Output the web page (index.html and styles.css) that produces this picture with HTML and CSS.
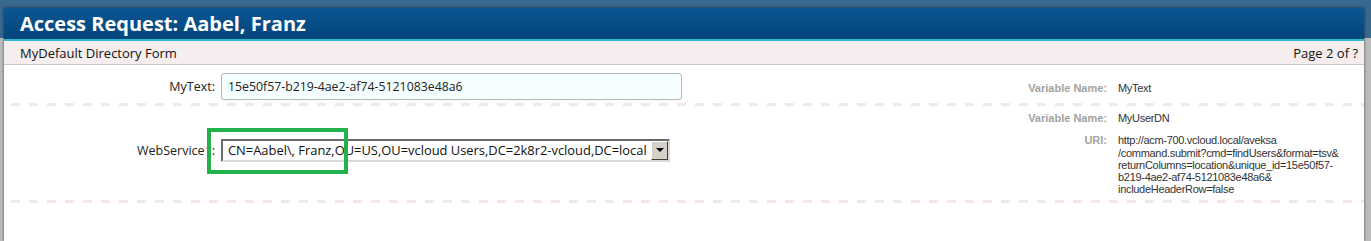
FILE: index.html
```
<!DOCTYPE html>
<html lang="en">
<head>
  <meta charset="UTF-8">
  <meta name="viewport" content="width=device-width, initial-scale=1.0">
  <title>Access Request: Aabel, Franz</title>
  <link rel="stylesheet" href="styles.css">
</head>
<body>
  <div class="window">
    <div class="titlebar">
      <h1>Access Request: Aabel, Franz</h1>
    </div>
    <div class="formbar">
      <span>MyDefault Directory Form</span>
      <span>Page 2 of ?</span>
    </div>

    <div class="field field-text">
      <label class="field-label" for="myText">MyText:</label>
      <div class="field-control">
        <input type="text" id="myText" class="textbox" value="15e50f57-b219-4ae2-af74-5121083e48a6">
      </div>
      <dl class="field-info">
        <dt>Variable Name:</dt>
        <dd>MyText</dd>
      </dl>
    </div>
    <div class="divider"></div>

    <div class="field field-ws">
      <label class="field-label" for="myUserDN">WebService<span class="req">*</span>:</label>
      <div class="field-control">
        <div class="dropdown">
          <select id="myUserDN">
            <option>CN=Aabel\, Franz,OU=US,OU=vcloud Users,DC=2k8r2-vcloud,DC=local</option>
          </select>
          <span class="dropdown-btn"><span class="arrow"></span></span>
        </div>
      </div>
      <dl class="field-info">
        <dt>Variable Name:</dt>
        <dd>MyUserDN</dd>
        <dt>URI:</dt>
        <dd>http://acm-700.vcloud.local/aveksa<br>/command.submit?cmd=findUsers&amp;format=tsv&amp;<br>returnColumns=location&amp;unique_id=15e50f57-<br>b219-4ae2-af74-5121083e48a6&amp;<br>includeHeaderRow=false</dd>
      </dl>
    </div>
    <div class="divider"></div>
  </div>

  <!-- highlight drawn over the screenshot -->
  <div class="highlight"></div>
</body>
</html>
```

FILE: styles.css
```
html, body {
  height: 100%;
}

body {
  margin: 0;
  background: linear-gradient(to bottom, #3a6990 0, #3a6990 38px, #bcbcbc 38px);
  font-family: "Open Sans", "Liberation Sans", sans-serif;
  color: #222;
  overflow: hidden;
}

.window {
  margin: 8px 7px 0 4px;
  height: calc(100% - 8px);
  background-color: #fff;
  box-shadow: 0 0 3px rgba(0, 0, 0, 0.6);
}

.titlebar {
  height: 31px;
  background: linear-gradient(to bottom, #0b5694, #02457a);
  border-bottom: 2px solid #2cb9cc;
}

.titlebar h1 {
  margin: 0;
  padding-left: 16px;
  font-size: 20px;
  line-height: 31px;
  font-weight: bold;
  color: #fff;
}

.formbar {
  display: flex;
  justify-content: space-between;
  align-items: center;
  height: 23px;
  padding: 0 6px 0 16px;
  background-color: #f6eeee;
  border-bottom: 1px solid #c9c9c9;
  font-size: 13px;
  color: #111;
}

.field {
  display: grid;
  grid-template-columns: 211px 1fr 374px;
  column-gap: 6px;
}

.field-text {
  height: 38px;
  align-items: start;
}

.field-ws {
  height: 94px;
  align-items: center;
}

.field-label {
  text-align: right;
  font-size: 12.5px;
  color: #222;
}

.field-text .field-label,
.field-text .field-control {
  padding-top: 8px;
}

.field-text .field-label {
  line-height: 27px;
}

.field-ws .field-label,
.field-ws .field-control {
  padding-bottom: 6px;
}

.req {
  color: #e00;
  font-size: 11px;
  vertical-align: top;
  margin-left: 1px;
}

.textbox {
  box-sizing: border-box;
  width: 461px;
  height: 27px;
  padding: 0 6px;
  border: 1px solid #b4b4b4;
  border-radius: 3px;
  background-color: #f5ffff;
  font-family: "Open Sans", "Liberation Sans", sans-serif;
  font-size: 12.3px;
  color: #222;
}

.dropdown {
  box-sizing: border-box;
  display: flex;
  width: 449px;
  height: 23px;
  border: 2px solid;
  border-color: #6a6a6a #d8d8d8 #d8d8d8 #6a6a6a;
  background-color: #fff;
}

.dropdown select {
  flex: 1;
  min-width: 0;
  appearance: none;
  -webkit-appearance: none;
  border: none;
  outline: none;
  background: transparent;
  padding: 0 0 0 5px;
  font-family: "Open Sans", "Liberation Sans", sans-serif;
  font-size: 12.9px;
  color: #111;
}

.dropdown-btn {
  box-sizing: border-box;
  display: flex;
  align-items: center;
  justify-content: center;
  flex: none;
  width: 17px;
  border: 1px solid;
  border-color: #fff #404040 #404040 #fff;
  background-color: #d4d0c8;
}

.arrow {
  width: 0;
  height: 0;
  border-left: 4px solid transparent;
  border-right: 4px solid transparent;
  border-top: 4px solid #000;
}

.field-info {
  display: grid;
  grid-template-columns: 117px 1fr;
  column-gap: 11px;
  row-gap: 10px;
  margin: 0;
  font-family: "Liberation Sans", sans-serif;
  font-size: 11px;
  line-height: 12.3px;
  letter-spacing: -0.3px;
}

.field-text .field-info {
  padding-top: 17px;
}

.field-ws .field-info {
  align-self: start;
  padding-top: 6px;
}

.field-info dt {
  text-align: right;
  font-weight: bold;
  color: #a2a2a2;
  letter-spacing: 0;
}

.field-info dd {
  margin: 0;
  color: #333;
}

.divider {
  height: 3px;
  margin-left: 7px;
  background-image: repeating-linear-gradient(to right, #f4e7e7 0, #f4e7e7 9px, transparent 9px, transparent 18px);
}

.highlight {
  position: absolute;
  left: 207px;
  top: 128px;
  width: 141px;
  height: 46px;
  box-sizing: border-box;
  border: 4px solid #22b14c;
}
```
